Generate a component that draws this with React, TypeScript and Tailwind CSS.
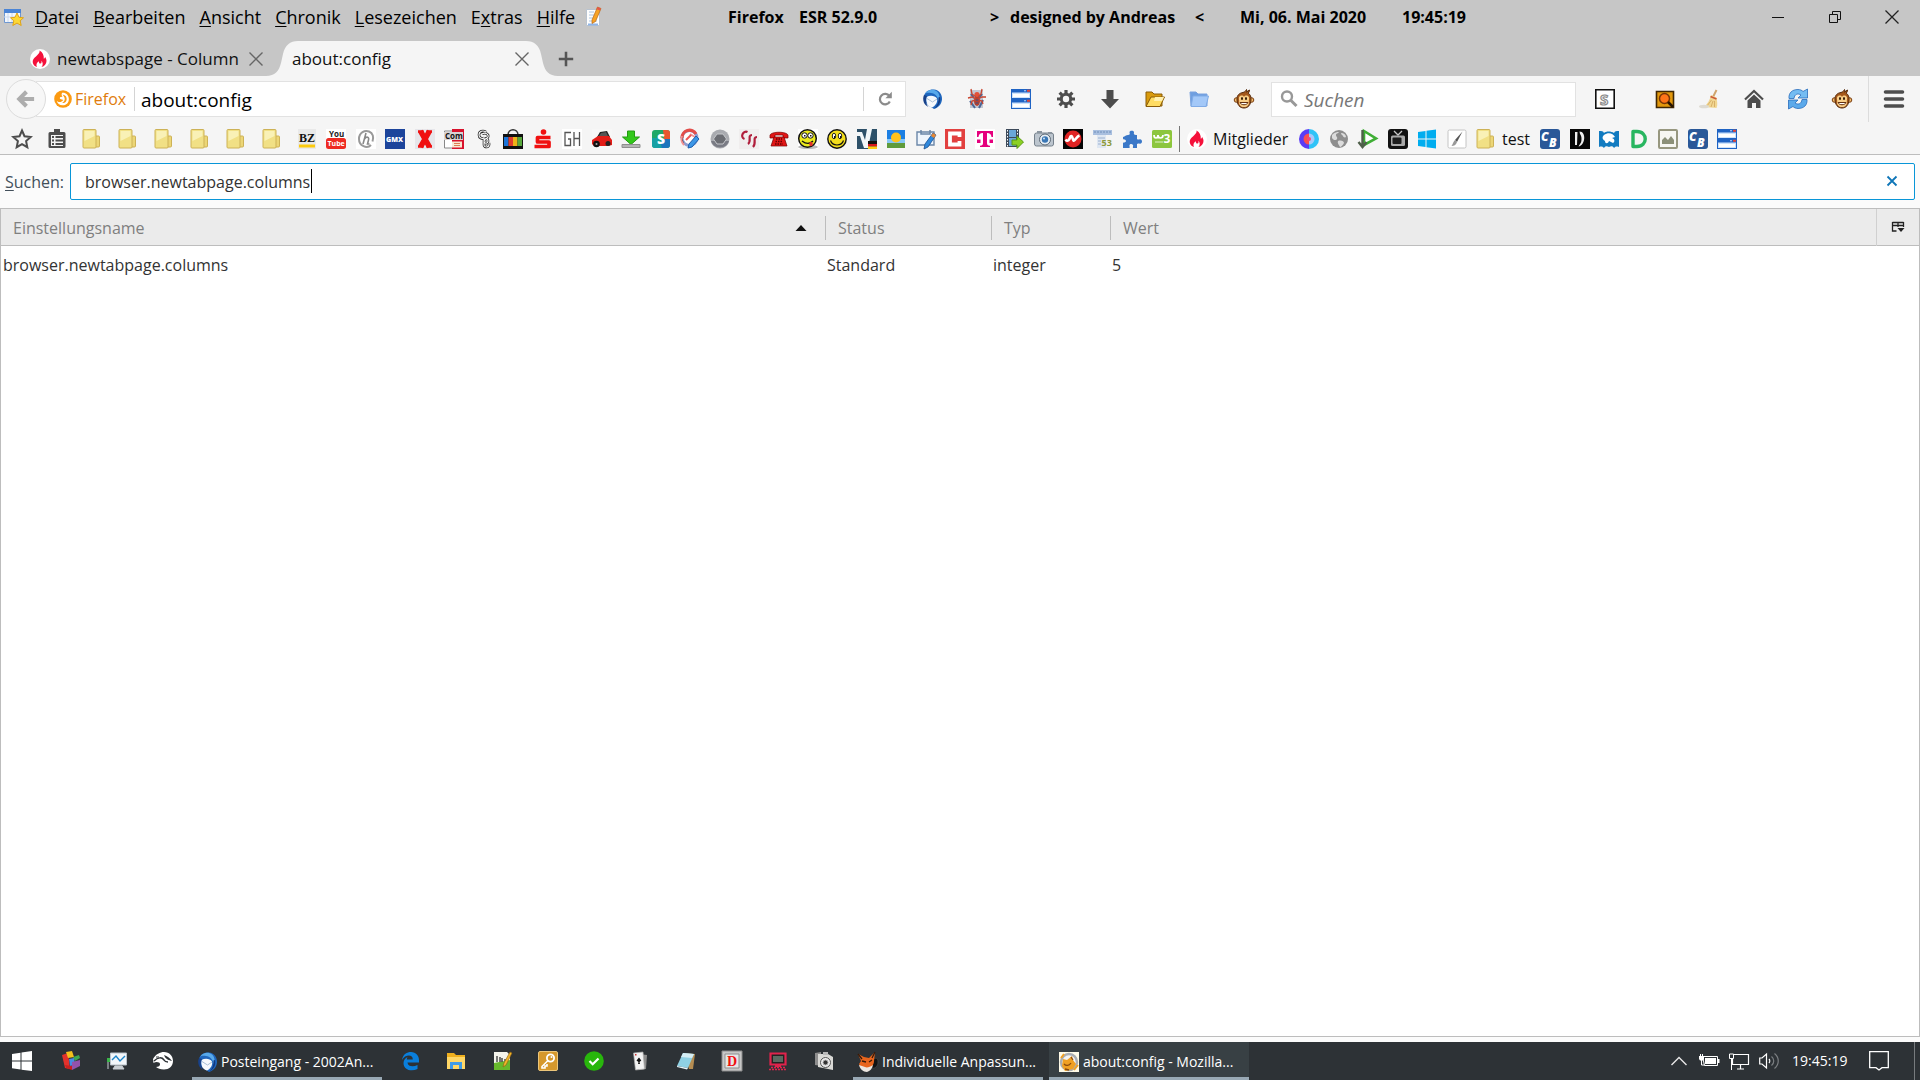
import type { ReactNode } from "react";

const FOLDER = (
  <>
    <path d="M4 1h9a1 1 0 0 1 1 1v5l3 1.5V17a1 1 0 0 1-1 1H4z" fill="#c9a93e" />
    <path d="M13 7h3.500a1 1 0 0 1 1 1v9a1 1 0 0 1-1 1H13z" fill="#ecd676" stroke="#cdb257" />
    <rect x="1" y="0.5" width="13" height="18.500" rx="1" fill="#f1e085" stroke="#cdb257" />
    <path d="M2.500 2h10v5l-10 5z" fill="#f9f1b6" />
  </>
);

const CB = (
  <>
    <rect width="20" height="20" rx="3" fill="#2a5898" />
    <text x="1" y="11.500" fontSize="12" fontWeight="800" fontStyle="italic" fill="#fff">C</text>
    <text x="9" y="17.500" fontSize="12" fontWeight="800" fontStyle="italic" fill="#fff">B</text>
  </>
);

const SESSION = (
  <>
    <path d="M0 0h20v20H0z" fill="#1e63c4" />
    <path d="M1 3.500h18v5.500H1zM1 13.500h18v5.500H1z" fill="#cfe4fc" />
    <path d="M2 5h16v3H2zM2 15h16v3H2z" fill="#fff" />
    <path d="M16 .8h3v2h-3zM16 10.800h3v2h-3z" fill="#e04438" />
    <path d="M13 1.300h2v1h-2zM13 11.300h2v1h-2z" fill="#bcd8fa" />
  </>
);

const FLAME = (
  <>
    <circle cx="10" cy="10" r="10" fill="#fff" />
    <path d="M9.500 1.500c1 3.500-5 6-6.500 9.500-1 3 .8 6 4 7-1.200-2.500 0-4.800 2-5.800-.2 1.800.5 2.500 1.500 2.300 1.200-.2 1.200-1.600.8-2.800 1.700 1.500 2 4.300.2 6.300 3-.8 5-3 5-6 0-1.800-.7-3.200-1.500-4.300 0 1-.4 1.800-1.200 2C14 6.200 12.800 3.300 9.500 1.500z" fill="#f5113b" />
  </>
);

const MONKEY = (
  <>
    <circle cx="2.500" cy="11" r="2.300" fill="#f0b96a" stroke="#7a3e10" />
    <circle cx="17.500" cy="11" r="2.300" fill="#f0b96a" stroke="#7a3e10" />
    <path d="M3 10c0-4 2.500-6 6-6.500C11 3 12 1.500 12.500.5c.5 1 .2 2-.2 2.700L15.500 1c0 1.500-.7 2.500-1.300 3.200 2 1.200 3 3.300 2.800 6.300-.2 5.500-3 8.500-7 8.500s-7-3-7-9z" fill="#a4581b" stroke="#54290a" />
    <path d="M5 8.500c1-2.500 4-2.500 5-.5 1-2 4-2 5 .5.300 1.500-.2 2.500-.2 3.500.8 4-1.800 6-4.800 6s-5.600-2-4.800-6c0-1-.5-2-.2-3.500z" fill="#f9cf88" />
    <ellipse cx="8" cy="9.500" rx="1" ry="1.600" fill="#2d1604" />
    <ellipse cx="12" cy="9.500" rx="1" ry="1.600" fill="#2d1604" />
    <path d="M6 13.500h8c-1 3-7 3-8 0z" fill="#fff" stroke="#643010" />
  </>
);

const THUNDERBIRD = (
  <>
    <path d="M2 7C3 2 8 0 12 .5c5 .5 8.500 5 8 10-.5 5-4 8.500-8 9.500-1-1-4-2-7-5C2 13 1.500 10 2 7z" fill="#1f66bd" />
    <path d="M3 5C6 0 12 0 15 2.500c3 2.500 3 7 2 10-1-5-4-8-8-8.500-3-.5-5 0-6 1z" fill="#58a9ea" />
    <path d="M4.500 8C8 6 13 6.500 15 9.500c.8 3-1 7-5 9-4-1-6.500-4.500-5.500-10.500z" fill="#f6f9fc" />
    <path d="M5 9.500l5.500 3.500L15 10" fill="none" stroke="#a9bfd6" />
    <path d="M2 6c-2 5 0 10 4.500 12C3.500 14.500 3.500 10 5 7z" fill="#17418a" />
    <path d="M18 8c1 5-1 9-5.500 11.500 3-3 4.500-7 4-11z" fill="#123a80" />
  </>
);

const ICONS: Record<string, ReactNode> = {
  folder: FOLDER,
  cb: CB,
  session: SESSION,
  flame: FLAME,
  monkey: MONKEY,
  thunderbird: THUNDERBIRD,
  bookmarkWindow: (
    <>
      <path d="M.5 2.500h16v13H.5z" fill="#f3f7fd" stroke="#6e97d0" />
      <path d="M0 2h17v4H0z" fill="#4a84d6" />
      <path d="M4 6v9M8 6v9M0 10h16" stroke="#c9d8ee" />
      <path d="M13 6l2 4.300 4.500.5-3.300 3 1 4.700-4.200-2.400L8.800 18.500l1-4.700-3.300-3 4.500-.5z" fill="#fdd835" stroke="#e0a318" />
    </>
  ),
  notepadPen: (
    <>
      <path d="M1.500 2.500h13v16h-13z" fill="#fdfdfd" stroke="#b9c3cf" />
      <path d="M3 16.500h10v2H3z" fill="#8fb4e6" />
      <path d="M4 14h8M4 11h8M4 8h6M4 5h5" stroke="#a9c4e2" />
      <path d="M7 13L12.500 0l3.500 1.500-5.500 13-3.500 2z" fill="#f7a325" stroke="#b8691a" strokeWidth="0.700" />
      <path d="M12.500 0L16 1.500l-1 2-3.500-1.200z" fill="#e3574c" />
    </>
  ),
  firefox: (
    <>
      <circle cx="10" cy="10" r="9.800" fill="#fb9a12" />
      <path d="M9 3c4-.5 7.500 2.500 7.500 7s-3 7-7 7c-3.300 0-6-2-6.500-5 1.500 1.800 3.800 1.800 5.500.7l2-1.700L7 10c-1-.8-.5-2 .5-2.200l2-.3C8.500 6.500 8 5 9 3z" fill="#fff" />
      <path d="M9.500 5c3.500.5 5 3 4.500 6-.5 2.500-2.500 3.500-5 3.500 2.300-1.500 3.300-3.300 2.800-5.500C11.300 7.500 10.500 6.500 9.500 5z" fill="#fb9a12" />
    </>
  ),
  back: <path d="M10.500 2L2.500 10l8 8M4 10h15" fill="none" stroke="#adadad" strokeWidth="4.500" />,
  reload: (
    <>
      <path d="M15.500 6.500A6.500 6.500 0 1 0 16 13" fill="none" stroke="#8b8b8b" strokeWidth="2.800" />
      <path d="M18.500 1v8h-8z" fill="#8b8b8b" />
    </>
  ),
  spider: (
    <>
      <path d="M3 1h13v18H3z" fill="#c3c8d2" />
      <path d="M3 12l5 7M16 11l-4 8M4 5l3 4M15 5l-3 4" stroke="#4a6596" strokeWidth="2" />
      <ellipse cx="10" cy="12" rx="3" ry="5" fill="#b8402f" />
      <circle cx="10" cy="5.500" r="2.600" fill="#e2523a" />
      <path d="M4 0l1 5 4 3M15 0l-1 5-3 3M1 9l4-1 4 2M19 8l-4 0-4 2M4 16l1-4 4-1M16 15l-1-3-4-1" fill="none" stroke="#c9452f" strokeWidth="1.300" />
      <path d="M8.500 11h3M8.500 14h3" stroke="#35558e" />
    </>
  ),
  gear: (
    <>
      <path d="M10 1v18M1 10h18M3.600 3.600l12.800 12.800M16.400 3.600L3.600 16.400" stroke="#4d4d4d" strokeWidth="3.200" />
      <circle cx="10" cy="10" r="4.700" fill="#f5f5f5" stroke="#4d4d4d" strokeWidth="3" />
    </>
  ),
  download: <path d="M6.500 1h7v9H19L10 19.500 1 10h5.500z" fill="#4d4d4d" />,
  openFolder: (
    <>
      <path d="M1 3h6l2 2h8v12H1z" fill="#d99a0c" stroke="#8a5c08" />
      <path d="M6 8h13.500L15 17.500H1z" fill="#ffdc62" stroke="#8a5c08" />
      <path d="M10 8h9l-2 4H9z" fill="#fff0b0" />
    </>
  ),
  blueFolder: (
    <>
      <path d="M1 3h6l2 2h9v12H2z" fill="#6f9fe0" stroke="#7aa3df" />
      <path d="M4 7h15.500L17 17.500H2z" fill="#a3c8f8" stroke="#80abe6" />
    </>
  ),
  search: (
    <>
      <circle cx="8" cy="7.500" r="5" fill="none" stroke="#989898" strokeWidth="2.400" />
      <path d="M11.500 11l6 6" stroke="#989898" strokeWidth="3" />
    </>
  ),
  stylish: (
    <>
      <path d="M.8.8h18.400v18.400H.8z" fill="#fff" stroke="#111" strokeWidth="1.600" />
      <text x="5" y="15.500" fontSize="15" fontWeight="700" fill="#fff" stroke="#8c8c8c" strokeWidth="1.200">S</text>
    </>
  ),
  orangeSearch: (
    <>
      <path d="M1.500 2.500h17v16h-17z" fill="#e2980c" stroke="#3f2603" strokeWidth="1.600" />
      <circle cx="9.500" cy="9.500" r="5" fill="#ff7418" stroke="#7a3606" strokeWidth="1.500" />
      <path d="M13 13l5 5" stroke="#2a1600" strokeWidth="2.600" />
    </>
  ),
  broom: (
    <>
      <path d="M17.500 1l-3.500 7" stroke="#cfa46c" strokeWidth="2" />
      <path d="M12 6l5.500 2.500c.5 4 1.500 7 0 10.500L5 18c3.500-3 6-7 7-12z" fill="#f1d691" />
      <path d="M11.500 7.500l6 2.500" stroke="#cc5b39" strokeWidth="1.800" />
      <path d="M8 17l4.500-6M12 18l2-6M15.500 18l0-6" stroke="#d8b068" />
      <ellipse cx="5" cy="17.500" rx="5" ry="1.800" fill="#dedbd2" />
    </>
  ),
  home: (
    <>
      <path d="M1 10.500L10 2l9 8.500" fill="none" stroke="#4d4d4d" strokeWidth="2.200" />
      <path d="M3.500 11.500L10 5.500l6.500 6V19H12v-5H8v5H3.500z" fill="#4d4d4d" />
    </>
  ),
  sync: (
    <>
      <path d="M1 9.500C.5 4 4 .5 10 .5c2 0 4 .8 5 2L19.500 0v9H10l3-3C10 4 6.500 5 6 9.500z" fill="#74bcf2" stroke="#276cbd" strokeWidth="0.800" />
      <path d="M19 10.500c.5 5.500-3 9-9 9-2 0-4-.8-5-2L.5 20v-9H10l-3 3c3 2 6.500 1 7-3.500z" fill="#5ba9ea" stroke="#276cbd" strokeWidth="0.800" />
    </>
  ),
  menu: <path d="M1.500 3h17M1.500 10h17M1.500 17h17" stroke="#4d4d4d" strokeWidth="3.600" strokeLinecap="round" />,
  star: <path d="M10 1.500l2.500 5.700 6.200.7-4.600 4.200 1.200 6.100L10 15.100l-5.300 3.100 1.200-6.100L1.300 7.900l6.200-.7z" fill="none" stroke="#4d4d4d" strokeWidth="2" />,
  clipboard: (
    <>
      <path d="M7 0h6v3h4a1.500 1.500 0 0 1 1.500 1.500v13A1.500 1.500 0 0 1 17 19H3a1.500 1.500 0 0 1-1.500-1.500v-13A1.500 1.500 0 0 1 3 3h4z" fill="#4d4d4d" />
      <path d="M4 6h12v11H4z" fill="#f5f5f5" />
      <path d="M5 8h2M5 11.500h2M5 15h2M8.500 8H16M8.500 11.500H16M8.500 15H16" stroke="#4d4d4d" strokeWidth="1.800" />
    </>
  ),
  bz: (
    <>
      <path d="M1 0h18v20H1z" fill="#e9e9e9" />
      <text x="2" y="12.500" fontSize="12" fontFamily="Liberation Serif, serif" fontWeight="700" fill="#111">BZ</text>
      <path d="M2 15.500h16v3H2z" fill="#fccb0f" />
    </>
  ),
  youtube: (
    <>
      <path d="M0 0h20v20H0z" fill="#fff" />
      <rect y="9" width="20" height="11" rx="2.500" fill="#ee2a22" />
      <text x="3" y="7.500" fontSize="8" fontWeight="700" fill="#222">You</text>
      <text x="1.500" y="17" fontSize="7" fontWeight="700" fill="#fff">Tube</text>
    </>
  ),
  at: (
    <>
      <path d="M0 0h20v20H0z" fill="#fff" />
      <path d="M15 16c-4 4-12 1-12-6S9 1 13 2.500s5 6 3.500 10" fill="none" stroke="#999" strokeWidth="2" />
      <path d="M10 4L7 15M8.500 10c2-3 5-2 4 1l-1 4h2" fill="none" stroke="#888" strokeWidth="1.600" />
    </>
  ),
  gmx: (
    <>
      <path d="M0 0h20v20H0z" fill="#1c449b" />
      <text x="1" y="12.500" fontSize="7" fontWeight="800" fill="#fff">GMX</text>
    </>
  ),
  redX: (
    <>
      <path d="M0 0h20v20H0z" fill="#e6e6ea" />
      <path d="M5.500 2l9 16M14.500 2l-9 16" stroke="#f01010" strokeWidth="5.500" />
      <path d="M3 2.500h5.500M11.500 2.500H17M3 17.500h5.500M11.500 17.500H17" stroke="#f01010" strokeWidth="2.500" />
    </>
  ),
  com: (
    <>
      <path d="M.5 2h15v17H.5z" fill="#fff" stroke="#888" />
      <path d="M8 0h12v20H8z" fill="#d8122c" />
      <path d="M0 3h19v8H0z" fill="#d9d2d2" />
      <path d="M8 12.500h10v6H8z" fill="#f8e8d4" />
      <path d="M10 14.500h6M10 16.500h6" stroke="#dd7b52" />
      <text x="1" y="10" fontSize="8" fontWeight="700" fill="#111">Com</text>
    </>
  ),
  braid: (
    <>
      <path d="M12 3c-3-2-7-1-7 3 0 3 3 4 5 3M8 5c3-2 7 0 6 3-1 2-4 1-4 4 0 3 4 3 4 0s-3-3-4 0M10 8v8c0 3 6 3 5-2" fill="none" stroke="#222" strokeWidth="2.600" />
      <path d="M12 3c-3-2-7-1-7 3 0 3 3 4 5 3M8 5c3-2 7 0 6 3-1 2-4 1-4 4 0 3 4 3 4 0s-3-3-4 0M10 8v8c0 3 6 3 5-2" fill="none" stroke="#fff" strokeWidth="1.100" />
    </>
  ),
  bag: (
    <>
      <path d="M5 6c0-7 10-7 10 0" fill="none" stroke="#333" strokeWidth="1.500" />
      <path d="M0 5h20v15H0z" fill="#111" />
      <path d="M1 8h4.500v9H1z" fill="#1c74d8" />
      <path d="M5.500 8H10v9H5.500z" fill="#df3d2d" />
      <path d="M10 8h4.500v9H10z" fill="#efb418" />
      <path d="M14.500 8H19v9h-4.500z" fill="#58a83c" />
    </>
  ),
  sparkasse: (
    <>
      <circle cx="10.500" cy="3" r="2.800" fill="#f01010" />
      <path d="M17.500 8.500H4.500v4.500H16v4.500H1.500" fill="none" stroke="#f01010" strokeWidth="3.700" strokeLinejoin="round" />
    </>
  ),
  gh: (
    <>
      <path d="M0 0h20v20H0z" fill="#fff" />
      <path d="M9 3.500H3v13h5.500V10H6M12 3v14M17.500 3v14M12 9.500h5.500" fill="none" stroke="#555" strokeWidth="1.300" />
    </>
  ),
  car: (
    <>
      <path d="M0 0h20v20H0z" fill="#f7f7f7" />
      <path d="M5 8l3-5 7-1 3 6z" fill="#222" />
      <path d="M0 11l6-4 11 0 3 4v5l-4 1H2l-2-2z" fill="#e31c17" />
      <path d="M7 7l2-3 5-1 2 4z" fill="#555" />
      <circle cx="4.500" cy="15" r="3.300" fill="#111" />
      <circle cx="16" cy="14.500" r="2.500" fill="#222" />
      <circle cx="4.500" cy="15" r="1" fill="#aaa" />
    </>
  ),
  greenDown: (
    <>
      <path d="M6.500 2h7v6h5L10 15.500 1.500 8h5z" fill="#32c81a" stroke="#249a12" />
      <path d="M1 15.500h18v3H1z" fill="#b5b5b5" stroke="#8e8e8e" />
    </>
  ),
  sColor: (
    <>
      <rect x="1" y="1" width="18" height="18" rx="3" fill="#1fa868" />
      <path d="M12 1h4a3 3 0 0 1 3 3v6h-6z" fill="#e8562e" />
      <path d="M10 10h9v6a3 3 0 0 1-3 3h-6z" fill="#1c75bd" />
      <path d="M1 9l7 0 3 10H4a3 3 0 0 1-3-3z" fill="#16a0a4" />
      <text x="6" y="15" fontSize="14" fontWeight="800" fill="#fff">S</text>
    </>
  ),
  compass: (
    <>
      <circle cx="9.500" cy="9" r="7.500" fill="#fff" stroke="#8d9cd0" strokeWidth="3" />
      <path d="M2 9a7.500 7.500 0 0 1 14-4" fill="none" stroke="#e34d49" strokeWidth="3.200" />
      <path d="M4 16a9 9 0 0 1-2-9M10 5l5 3" stroke="#f39292" strokeWidth="2" />
      <path d="M6 11l5-5" stroke="#e55" strokeWidth="2" />
      <path d="M16 7l3 3-7 8-4 1 1-4z" fill="#3d97e6" stroke="#1c5fae" />
    </>
  ),
  ring: (
    <>
      <circle cx="10" cy="10" r="9.500" fill="#a9abb0" />
      <path d="M1 12a9.500 9.500 0 0 0 18 0z" fill="#797b84" />
      <path d="M7 5h6l3.500 5-3.500 5H7l-3.500-5z" fill="#6b6d73" stroke="#c4c6ca" />
    </>
  ),
  css: (
    <>
      <path d="M0 0h20v20H0z" fill="#f0eeee" />
      <path d="M8.500 3c-4-2-8 5-3 7M13 6c-5 0 0 6-4 9M18 8c-5 0 0 6-4 10" fill="none" stroke="#b01e3c" strokeWidth="2.200" />
    </>
  ),
  phone: (
    <>
      <path d="M1 7c-1-5 19-5 18 0v2h-5V6H6v3H1z" fill="#e21616" stroke="#700" strokeWidth="0.700" />
      <path d="M5 8h10l3 9H2z" fill="#e21616" stroke="#700" strokeWidth="0.700" />
      <path d="M7 10h6M6.500 12.500h7M6 15h8" stroke="#600" strokeWidth="1.500" strokeDasharray="1.500 1" />
    </>
  ),
  goofy: (
    <>
      <path d="M0 0h20v20H0z" fill="#fff" />
      <ellipse cx="10" cy="18" rx="10" ry="2" fill="#bbb" />
      <circle cx="9.500" cy="9.500" r="8.800" fill="#ecea1c" stroke="#111" strokeWidth="1.500" />
      <circle cx="6.500" cy="6.500" r="2.700" fill="#fff" stroke="#111" />
      <circle cx="12.500" cy="6.500" r="2.700" fill="#fff" stroke="#111" />
      <path d="M6 6h1.500v1.500H6zM12 6h1.500v1.500H12z" fill="#111" />
      <path d="M4 12c4 3 8 3 11 0" fill="none" stroke="#111" strokeWidth="1.400" />
      <ellipse cx="13" cy="15" rx="1.800" ry="2.300" fill="#e0322a" />
    </>
  ),
  smiley: (
    <>
      <circle cx="10" cy="10" r="9.200" fill="#f4de1c" stroke="#111" strokeWidth="1.400" />
      <ellipse cx="7" cy="7" rx="1.700" ry="2.800" fill="#fff" stroke="#111" strokeWidth="0.900" />
      <ellipse cx="13" cy="7" rx="1.700" ry="2.800" fill="#fff" stroke="#111" strokeWidth="0.900" />
      <path d="M7 7h1v2H7zM13 7h1v2h-1z" fill="#111" />
      <path d="M3.500 11.500c2 6 11 6 13 0" fill="none" stroke="#111" strokeWidth="1.200" />
    </>
  ),
  vGerman: (
    <>
      <path d="M0 0h20v20H0z" fill="#2d5068" />
      <path d="M0 3h5l3 8 2-11h5l-4 19H7L3 7H0z" fill="#f2f6f8" />
      <path d="M11 12h9v3h-9z" fill="#111" />
      <path d="M11 15h9v2.500h-9z" fill="#d8151c" />
      <path d="M11 17.500h9V20h-9z" fill="#fccb0f" />
    </>
  ),
  sun: (
    <>
      <path d="M1 1h18v18H1z" fill="#1c7fe3" />
      <path d="M1 10h18v4H1z" fill="#86c7f8" />
      <path d="M1 14h18v5H1z" fill="#5f9b3c" />
      <circle cx="10" cy="8.500" r="5" fill="#ffc21c" />
    </>
  ),
  clipPen: (
    <>
      <path d="M1 3h17v13H1z" fill="#eef5fd" stroke="#6b87a8" strokeWidth="1.400" />
      <path d="M5 1v4h9V1" fill="none" stroke="#6b87a8" strokeWidth="1.500" />
      <path d="M17 4l3 2-8 12-4 2 1-5z" fill="#2e88dd" stroke="#1a4f91" strokeWidth="0.800" />
      <path d="M17 4l3 2-2 3-3-2z" fill="#e88733" />
    </>
  ),
  chipRed: (
    <>
      <path d="M0 0h20v20H0z" fill="#e2403f" />
      <path d="M14.500 8V4.500H5v11h9.500V12" fill="none" stroke="#fff" strokeWidth="3.800" />
    </>
  ),
  telekom: (
    <>
      <path d="M0 0h20v20H0z" fill="#fff" />
      <path d="M2 2h16v6h-1.500c-.3-2.500-1.500-4-4.500-4v10c0 2 .8 2.600 3 2.800V18H5v-1.200c2.200-.2 3-.8 3-2.800V4c-3 0-4.200 1.500-4.500 4H2zM2 10.500h3.500V14H2zM14.500 10.500H18V14h-3.500z" fill="#e5007d" />
    </>
  ),
  film: (
    <>
      <path d="M2 0h13v18H2z" fill="#3d4a5a" />
      <path d="M5 1h7v7H5zM5 9h7v8H5z" fill="#6aa7da" />
      <path d="M3.500 1v17M13.500 1v17" stroke="#fff" strokeDasharray="1.500 1.500" />
      <path d="M8 11h5V7l6.500 6L13 19.500V16H8z" fill="#8bd024" stroke="#5b9a12" />
    </>
  ),
  camera: (
    <>
      <rect x="0.500" y="4" width="19" height="13" rx="2" fill="#bcc5ce" stroke="#76818c" />
      <path d="M3 2h5v2H3zM14 3h4v2h-4z" fill="#8a949e" />
      <circle cx="11" cy="10.500" r="5.500" fill="#e5edf4" stroke="#5b6773" />
      <circle cx="11" cy="10.500" r="3.200" fill="#3a77b5" />
      <circle cx="10" cy="9.500" r="1" fill="#cfe6fa" />
    </>
  ),
  pulse: (
    <>
      <path d="M0 0h20v20H0z" fill="#050505" />
      <circle cx="10" cy="10" r="8.500" fill="#e02424" />
      <path d="M2.500 10.500c2 3 4 0 5-3 2-2 2 3 3 4s3-4 6-5" fill="none" stroke="#fff" strokeWidth="2.600" />
    </>
  ),
  tool53: (
    <>
      <path d="M0 1h19v5H0z" fill="#a9bfdf" />
      <path d="M4 6h9v13H4z" fill="#dfe7f2" />
      <path d="M1 3h17" stroke="#6f8eb9" strokeDasharray="2 1" />
      <path d="M5 9h7M5 12h3M5 15h3" stroke="#9ab0d0" />
      <text x="8.500" y="17" fontSize="9" fontWeight="700" fill="#8e9a3a">53</text>
    </>
  ),
  puzzle: <path d="M6 6c2 0 2-1 1.500-2.500C7 1 12.500 1 12 3.500 11.500 5 12 6 14 6h1v4c1 1 1.800.5 2.800.3 3-.3 3 4.700 0 4.400-1-.2-1.800-.7-2.800.3v4h-4c-.5-1 .5-2 0-3-.8-1.500-3-1.500-3.500 0-.3 1 .5 2 0 3H1v-4.500C.5 13 4 14 4 12s-3-1-3-2.500V8c2-.5 3-2 5-2z" fill="#3b78c8" />,
  w3: (
    <>
      <rect y="1" width="20" height="18" rx="1.500" fill="#8cc63e" />
      <path d="M2 6c0 4 4 4 4 0 0 4 5 4 5 0" fill="none" stroke="#fff" strokeWidth="1.700" />
      <path d="M3 13h8" stroke="#dff2c6" />
      <text x="11.500" y="14" fontSize="12" fontWeight="700" fill="#fff">3</text>
    </>
  ),
  swirl: (
    <>
      <path d="M10 0a10 10 0 0 0 0 20z" fill="#5b3cf5" />
      <path d="M10 0a10 10 0 0 1 0 20z" fill="#2fc3f7" />
      <path d="M10 4.500a5.500 5.500 0 0 0 0 11z" fill="#fb4d4f" />
      <path d="M10 4.500a5.500 5.500 0 0 1 0 11z" fill="#a6c8fa" />
      <circle cx="10" cy="10" r="2" fill="#f04b7a" />
    </>
  ),
  globe: (
    <>
      <circle cx="10" cy="10" r="9" fill="#8e8e8e" />
      <path d="M3 6c3-3 5-3 7-3-1 2-3 1-3 3s2 2 1 4-4 1-5-1zM12 4c3 0 5 2 5 4-1 1-3 0-3-1s-2-1-2-3zM9 12c3-1 6 0 6 2-1 2-3 4-4 4-1-2-3-4-2-6z" fill="#dcdcdc" />
    </>
  ),
  play: (
    <>
      <path d="M6 2l12 7.500L6 16z" fill="#fff" stroke="#3fae35" strokeWidth="2.600" />
      <path d="M4.500 1v16M.5 13l4 5 4-5" fill="none" stroke="#4f5f4a" strokeWidth="2.400" />
    </>
  ),
  tv: (
    <>
      <rect width="20" height="20" rx="3" fill="#121212" />
      <path d="M6 2l4 4 4-4" fill="none" stroke="#c9c9c9" strokeWidth="1.300" />
      <rect x="3" y="6.500" width="14" height="10.500" rx="1.500" fill="#a9a9a9" />
      <rect x="4.500" y="8.500" width="9" height="6.500" rx="1" fill="#1d1d1d" />
    </>
  ),
  win10: <path d="M1 3l7.500-1v7.500H1zM9.500 1.800L19 .5v9H9.500zM1 10.500h7.500V18L1 17zM9.500 10.500H19v9l-9.500-1.300z" fill="#00adef" />,
  brush: (
    <>
      <rect x="1" y="1" width="18" height="18" rx="1.500" fill="#fff" stroke="#c4c4c4" />
      <path d="M15.500 2.500L8 11l2 2z" fill="#555" />
      <path d="M8 11l2 2c-1 3-3 4-5.500 4 1.500-2 1.500-4 3.500-6z" fill="#999" />
    </>
  ),
  dBlack: (
    <>
      <path d="M0 0h20v20H0z" fill="#080808" />
      <path d="M5 3h2.500l-.5 13H5zM9.500 2.500c7 0 6 14-1 15l1.500-2.500c2-2 2-8 0-10z" fill="#eee" />
    </>
  ),
  blueBook: (
    <>
      <path d="M0 2c3 0 4 0 5 2 2-2 7-2 10 0 1-2 2-2 5-2v16c-3-1-4 0-5 1-1-2-3-2-5-1-2-1-4-1-5 1-1-1-2-2-5-1z" fill="#127bc0" />
      <path d="M5 6c4-3 9-2 11 2l-3 1c3 1 3 4 1 5l-4-2c-1 3-4 3-4 0-3-2-3-4-1-6z" fill="#fff" />
    </>
  ),
  dGreen: <path d="M4 2.500h4c11 0 11 15 0 15H4z" fill="none" stroke="#28b660" strokeWidth="3.400" strokeLinejoin="round" />,
  image: (
    <>
      <rect x="1" y="1" width="18" height="18" rx="1" fill="#f7f7f2" stroke="#97977f" strokeWidth="2" />
      <path d="M4 15V11l3-3 3 3 3-4 3 4v4z" fill="#8c9078" />
    </>
  ),
  windows: <path d="M0 3l8.500-1.300V9.500H0zM9.500 1.500L20 0v9.500H9.500zM0 10.500h8.500v8L0 17.300zM9.500 10.500H20V20L9.500 18.700z" fill="#fff" />,
  blocks: (
    <>
      <path d="M1 4l6-2 2 16-5-1z" fill="#e2322c" />
      <path d="M5 1l6-1 2 6-6 1z" fill="#f4c01c" />
      <path d="M12 6l6-2 1 3-5 3z" fill="#3da751" />
      <path d="M8 8l5-1 1 7-5 1z" fill="#468be4" />
      <path d="M11 11l8-2v6l-8 4z" fill="#9352ac" />
      <path d="M4 14l7 1v4l-6-2z" fill="#c92020" />
    </>
  ),
  monitorGraph: (
    <>
      <path d="M3.500 2h16v12h-16z" fill="#f2f6fa" stroke="#b9c1c9" />
      <path d="M5 9l4-4 4 5 5-5" fill="none" stroke="#1d84c8" strokeWidth="1.400" />
      <path d="M0 7h3v4H0z" fill="#3bb54a" />
      <path d="M1 11v7M8 15h7l2 3H6z" stroke="#c9ced3" fill="#c9ced3" />
    </>
  ),
  dinosaur: (
    <>
      <path d="M0 8C3 3 7 1 11 1c5.500 0 9 4 9 9s-4 8.500-9 8.500c-4 0-6-1-8-2.500 4 0 5-3 3-4.500C4 10.500 2 11 .5 12z" fill="#fff" />
      <path d="M1 10C5 6 9 6 11 9c1 2 2 2 4 2" fill="none" stroke="#2d3236" strokeWidth="1.500" />
      <path d="M11 4c3 1 6 3 8 6-3-1-6-1-8-6z" fill="#2d3236" />
      <path d="M3 6h3" stroke="#2d3236" />
    </>
  ),
  edge: <path d="M2 9C3 3 7 1 11 1c5 0 8 4 8 8v2.500H7.500c.3 4 5.500 5 10 2.500v4c-6 3-14 1-14-6 0-3 2-5 4-6-.5 1-.7 2-.7 2.500h6C13 3 5 3.500 2 9z" fill="#0a7fdc" />,
  explorer: (
    <>
      <path d="M1 2h7l2 2h9v14H1z" fill="#f0b01e" />
      <path d="M1 6h18v12H1z" fill="#ffd766" />
      <path d="M4 18v-7h12v7h-3v-4H7v4z" fill="#3f9be6" />
    </>
  ),
  notepadpp: (
    <>
      <path d="M2 1h13l3 3v15H2z" fill="#f4f4ec" />
      <path d="M2 12l16-3v10H2z" fill="#67b82c" />
      <path d="M5 5v6M8 6v5M10 7v4M13 8v2" stroke="#333" strokeWidth="1.300" />
      <path d="M18 1l2 1-6 12-3 2 1-4z" fill="#f0b62a" stroke="#8c5b12" strokeWidth="0.600" />
    </>
  ),
  key: (
    <>
      <rect x="0.500" y="0.500" width="19" height="19" rx="1.500" fill="#d6982c" stroke="#ecc67a" />
      <circle cx="12.500" cy="7" r="3.600" fill="none" stroke="#fff" strokeWidth="1.800" />
      <path d="M10 9.500L4 15.500v1.500h3v-2h2v-2" fill="none" stroke="#fff" strokeWidth="1.600" />
      <circle cx="13.500" cy="6" r="1" fill="#fff" />
    </>
  ),
  check: (
    <>
      <circle cx="10" cy="10" r="9.800" fill="#28b60c" />
      <path d="M5.500 10l3.200 3.200L14.500 7.500" fill="none" stroke="#fff" strokeWidth="2.200" />
    </>
  ),
  cards: (
    <>
      <path d="M9 3l8 1-1 14-7 1z" fill="#8d8d8d" />
      <path d="M3.500 2l9.500-1 1.500 17-9 1z" fill="#f3f3f3" stroke="#aaa" strokeWidth="0.700" />
      <path d="M9 6.500l2.300 3-1.800 1.500.5 2H8l.5-2-2-1.500z" fill="#111" />
      <path d="M5 3h1.500v1.500H5z" fill="#c33" />
    </>
  ),
  note: (
    <>
      <path d="M8 2l11 1-2 15H13z" fill="#b58d52" />
      <path d="M7 2l11 1-6 14L1 15z" fill="#8fd1e4" />
      <path d="M7 2l11 1-2 4L5 6z" fill="#d5eef5" />
      <path d="M1 15l11 2-1 1.500L1 16z" fill="#e9f6fa" />
    </>
  ),
  dRed: (
    <>
      <path d="M0 0h20v20H0z" fill="#c7c7c7" stroke="#8a8a8a" />
      <path d="M3 3h14v14H3z" fill="#e6e6e6" stroke="#8f8f8f" />
      <text x="5" y="15" fontSize="14" fontWeight="700" fontFamily="Liberation Serif, serif" fill="#f01010">D</text>
    </>
  ),
  redPc: (
    <>
      <path d="M2.500 2.500h15v11h-15z" fill="#222" stroke="#e0234c" strokeWidth="2.200" />
      <path d="M5 5h10v6H5z" fill="#5a6a61" />
      <path d="M7 14h6v2H7z" fill="#e0234c" />
      <path d="M1 18.500h18M3 16.500h15" stroke="#e0234c" strokeWidth="1.500" strokeDasharray="2 1" />
    </>
  ),
  grayCam: (
    <>
      <path d="M1 2l6-1v14l-6-1z" fill="#8d8d8d" />
      <path d="M4 3h10l5 3v13L4 16z" fill="#d9d9d6" />
      <path d="M9 1h5v3H9z" fill="#b9b9b9" />
      <circle cx="11.500" cy="11.500" r="5" fill="#efefef" stroke="#555" />
      <circle cx="11.500" cy="11.500" r="2.500" fill="#333" stroke="#aaa" />
    </>
  ),
  fox: (
    <>
      <path d="M14 8c4-3 6-2 6 2s-3 7-6 6z" fill="#111314" stroke="#4c5053" strokeWidth="0.600" />
      <path d="M0 2l6 3 5 1 6-6-1 9c0 4-3 7-6 9-5 0-8-3-9-6l2-3z" fill="#e8651d" />
      <path d="M1 13c2 1 4 1 6 2s5 0 8-2c-1 4-3 6-6 7-4 0-7-3-8-7z" fill="#ece6e0" />
      <path d="M4 9l4 1M14 8l-3 2M0 2l4 5M17 0l-3 6" stroke="#371a08" strokeWidth="1.300" />
    </>
  ),
  foxRing: (
    <>
      <path d="M0 0h20v20H0z" fill="#fffbe8" />
      <circle cx="10" cy="10" r="8" fill="#f3f3f3" stroke="#a9adb2" strokeWidth="2.500" />
      <path d="M4 7l4 1 5-4 1 4 3 4-3 5-8 2-3-5z" fill="#f0a023" />
      <path d="M5 12c2 2 5 2 7-1M12 5l2 3M6 17l4 1" fill="none" stroke="#8a4a0b" strokeWidth="1.300" />
      <path d="M2 6l3-4M15 18l4-5" stroke="#f0a023" strokeWidth="2" />
    </>
  ),
  chevronUp: <path d="M2.500 14L10 6.500l7.500 7.500" fill="none" stroke="#e8e8e8" strokeWidth="1.400" />,
  battery: (
    <>
      <path d="M3.500 5.500h15v9h-13z" fill="none" stroke="#fff" />
      <path d="M6 7h11v6H6zM19 8h1.500v4H19zM0 5h5v3l-1 1.500H1L0 8z" fill="#fff" />
      <path d="M1.500 3v3M3.500 3v3M2.500 9v5h3" fill="none" stroke="#fff" />
    </>
  ),
  network: (
    <>
      <path d="M5 3.500h14.500v10H3.500V8M11.500 14v4M8 18h7" fill="none" stroke="#fff" strokeWidth="1.200" />
      <path d="M.5 3v4.500h4V3zM2.500 8v11" fill="none" stroke="#fff" />
    </>
  ),
  speaker: (
    <>
      <path d="M.7 7v6H3l4.500 4V3L3 7z" fill="none" stroke="#fff" strokeWidth="1.200" />
      <path d="M10 8c1 1 1 3 0 4" fill="none" stroke="#fff" strokeWidth="1.200" />
      <path d="M12.500 5.500c3 2.500 3 6.500 0 9M15.500 2.500c5 4 5 11 0 15" fill="none" stroke="#7b7f82" strokeWidth="1.200" />
    </>
  ),
  message: <path d="M.7.7h18.600v16H13L10 19l-3-2.300H.7z" fill="none" stroke="#fff" strokeWidth="1.300" />,
  minimize: <path d="M4 10.500h12" stroke="#111" />,
  restore: <path d="M4.500 7.500h8v8h-8zM7.500 7.500v-3h8v8h-3" fill="none" stroke="#111" />,
  close: <path d="M3.500 3.500l13 13M16.500 3.500l-13 13" stroke="#222" strokeWidth="1.300" />,
  tabClose: <path d="M3.500 3.500l13 13M16.500 3.500l-13 13" stroke="#666" strokeWidth="1.400" />,
  plus: <path d="M10 1v18M1 10h18" stroke="#555" strokeWidth="3.200" />,
  clear: <path d="M5.500 5.500l9 9M14.500 5.500l-9 9" stroke="#0f76b8" strokeWidth="1.800" />,
  sortUp: <path d="M4.500 13L10 7l5.500 6z" fill="#111" />,
  picker: (
    <>
      <path d="M4.500 5.500h11M4.500 8.500h11M4.500 5v9h4M10 5v5M15.500 5v5" fill="none" stroke="#222" strokeWidth="1.300" />
      <path d="M9.500 11h7L13 15z" fill="#222" />
    </>
  ),
};

function Icon({ name, className = "size-5" }: { name: string; className?: string }) {
  return (
    <svg viewBox="0 0 20 20" className={`${className} shrink-0 overflow-visible`} aria-hidden="true">
      {ICONS[name]}
    </svg>
  );
}

function IconButtons({ names, className = "" }: { names: string[]; className?: string }) {
  return (
    <div className={`flex shrink-0 items-center justify-between ${className}`}>
      {names.map((name, i) => (
        <button key={i} type="button" aria-label={name}>
          <Icon name={name} className="block size-5" />
        </button>
      ))}
    </div>
  );
}

const menus = [
  ["", "D", "atei"],
  ["", "B", "earbeiten"],
  ["", "A", "nsicht"],
  ["", "C", "hronik"],
  ["", "L", "esezeichen"],
  ["E", "x", "tras"],
  ["", "H", "ilfe"],
];

function TitleBar() {
  return (
    <header className="flex h-[41px] bg-[#c6c6c6] pb-[7px] text-black">
      <nav className="flex w-[728px] shrink-0 items-center gap-3.5 pl-1 text-lg">
        <Icon name="bookmarkWindow" className="-mr-[3px] size-5" />
        {menus.map(([before, key, after]) => (
          <button key={before + key + after} type="button" className="leading-6">
            {before}
            <span className="underline decoration-1 underline-offset-2">{key}</span>
            {after}
          </button>
        ))}
        <Icon name="notepadPen" className="-ml-1 size-5" />
      </nav>
      <div className="flex flex-1 items-center whitespace-pre text-base font-bold">
        <span className="w-[71px]">Firefox</span>
        <span className="w-[191px]">ESR 52.9.0</span>
        <span className="w-5">&gt;</span>
        <span className="w-[185px]">designed by Andreas</span>
        <span className="w-[45px]">&lt;</span>
        <span className="w-[162px]">Mi, 06. Mai 2020</span>
        <span>19:45:19</span>
      </div>
      <div className="flex">
        {["minimize", "restore", "close"].map((name) => (
          <button key={name} type="button" aria-label={name} className="grid w-[57px] place-items-center">
            <Icon name={name} />
          </button>
        ))}
      </div>
    </header>
  );
}

function TabStrip() {
  return (
    <div className="flex h-[35px] items-center bg-[#c6c6c6] text-[17px] text-[#111]">
      <div className="flex w-[266px] items-center pl-[30px]">
        <Icon name="flame" />
        <span className="ml-[7px] w-[193px] whitespace-nowrap">newtabspage - Column</span>
        <button type="button" aria-label="Tab schließen">
          <Icon name="tabClose" className="block size-5" />
        </button>
      </div>
      <div className="relative h-full w-[292px]">
        <svg viewBox="0 0 292 35" preserveAspectRatio="none" className="absolute inset-0 size-full" aria-hidden="true">
          <path d="M0 35c9 0 13-5 15-13l2-9C19 4 24 0 32 0h228c8 0 13 4 15 13l2 9c2 8 6 13 15 13z" fill="#f5f5f5" />
        </svg>
        <div className="relative flex h-full items-center justify-between pr-[26px] pl-[26px]">
          <span>about:config</span>
          <button type="button" aria-label="Tab schließen">
            <Icon name="tabClose" className="block size-5" />
          </button>
        </div>
      </div>
      <button type="button" aria-label="Neuer Tab">
        <Icon name="plus" className="block size-4" />
      </button>
    </div>
  );
}

function NavBar() {
  return (
    <div className="flex h-[46px] items-center bg-[#f5f5f5]">
      <button
        type="button"
        aria-label="Zurück"
        className="z-10 ml-1.5 grid size-10 shrink-0 place-items-center rounded-full border border-[#dcdcdc] bg-[#f7f7f7]"
      >
        <Icon name="back" className="size-[18px]" />
      </button>
      <div className="-ml-2.5 flex h-9 flex-1 items-center border border-[#e2e2e2] bg-white pl-[17px]">
        <Icon name="firefox" className="size-[18px]" />
        <span className="ml-[3px] w-[59px] text-base text-[#e07c0c]">Firefox</span>
        <input
          aria-label="Adresse"
          defaultValue="about:config"
          className="h-6 min-w-0 flex-1 border-l border-[#d4d4d4] pt-0.5 pl-1.5 text-[19px] text-black outline-none"
        />
        <button type="button" aria-label="Neu laden" className="grid h-6 w-[42px] place-items-center border-l border-[#d4d4d4]">
          <Icon name="reload" className="size-4" />
        </button>
      </div>
      <IconButtons
        className="ml-4 w-[332px]"
        names={["thunderbird", "spider", "session", "gear", "download", "openFolder", "blueFolder", "monkey"]}
      />
      <label className="ml-[17px] flex h-[35px] w-[305px] shrink-0 items-center border border-[#e2e2e2] bg-white pl-[7px]">
        <Icon name="search" />
        <input
          aria-label="Suchen"
          placeholder="Suchen"
          className="ml-[5px] h-7 min-w-0 flex-1 pt-0.5 text-[19px] italic outline-none placeholder:text-[#777]"
        />
      </label>
      <IconButtons className="ml-[19px]" names={["stylish"]} />
      <IconButtons className="ml-10 w-[197px]" names={["orangeSearch", "broom", "home", "sync", "monkey"]} />
      <div className="ml-4 h-full w-px bg-[#dcdcdc]" />
      <IconButtons className="mr-4 ml-[15px]" names={["menu"]} />
    </div>
  );
}

function BookmarksBar() {
  return (
    <div className="flex h-[33px] items-center border-b border-[#bdbdbd] bg-[#f5f5f5] pt-0.5 pl-3 text-base text-[#111]">
      <IconButtons className="w-[55px]" names={["star", "clipboard"]} />
      <IconButtons className="ml-[15px] w-[200px]" names={["folder", "folder", "folder", "folder", "folder", "folder"]} />
      <IconButtons
        className="ml-[15px] w-[875px]"
        names={[
          "bz", "youtube", "at", "gmx", "redX", "com", "braid", "bag", "sparkasse", "gh",
          "car", "greenDown", "sColor", "compass", "ring", "css", "phone", "goofy", "smiley", "vGerman",
          "sun", "clipPen", "chipRed", "telekom", "film", "camera", "pulse", "tool53", "puzzle", "w3",
        ]}
      />
      <a href="#mitglieder" className="ml-[7px] flex h-[26px] w-[120px] items-center gap-1.5 border-l border-[#777] pl-[7px]">
        <Icon name="flame" />
        Mitglieder
      </a>
      <IconButtons className="w-[197px]" names={["swirl", "globe", "play", "tv", "win10", "brush", "folder"]} />
      <a href="#test" className="w-11 pl-1.5">
        test
      </a>
      <IconButtons className="w-[197px]" names={["cb", "dBlack", "blueBook", "dGreen", "image", "cb", "session"]} />
    </div>
  );
}

function SearchRow() {
  return (
    <div className="flex h-[53px] items-center pr-[5px] pl-[5px] text-base">
      <label htmlFor="pref-search" className="w-[65px] text-[#424f5a]">
        <span className="underline decoration-1 underline-offset-2">S</span>uchen:
      </label>
      <div className="relative flex flex-1">
        <input
          id="pref-search"
          defaultValue="browser.newtabpage.columns"
          className="h-[37px] w-full rounded-xs border border-[#0996d8] bg-white px-3.5 text-[#333] outline-none"
        />
        <span className="absolute top-1.5 left-[241px] h-6 w-px bg-black" />
        <button type="button" aria-label="Löschen" className="absolute top-2 right-[13px]">
          <Icon name="clear" className="block size-5" />
        </button>
      </div>
    </div>
  );
}

const prefs = [{ name: "browser.newtabpage.columns", status: "Standard", type: "integer", value: "5" }];

function PrefTable() {
  return (
    <div className="mb-[5px] flex-1 border border-[#bdbdbd] bg-white">
      <table className="w-full table-fixed text-left text-base">
        <colgroup>
          <col className="w-[824px]" />
          <col className="w-[166px]" />
          <col className="w-[119px]" />
          <col />
          <col className="w-[43px]" />
        </colgroup>
        <thead className="bg-[#ebebeb] text-[#7f7f7f]">
          <tr className="h-9 border-b border-[#bdbdbd]">
            <th className="p-0 pt-0.5 pl-3 font-normal">
              <span className="flex items-center justify-between pr-3.5">
                Einstellungsname
                <Icon name="sortUp" />
              </span>
            </th>
            {["Status", "Typ", "Wert"].map((title) => (
              <th key={title} className="p-0 pt-0.5 font-normal">
                <span className="block border-l border-[#bdbdbd] pl-3">{title}</span>
              </th>
            ))}
            <th className="border-l border-[#d0d0d0] p-0">
              <button type="button" aria-label="Spalten auswählen" className="grid w-full place-items-center">
                <Icon name="picker" />
              </button>
            </th>
          </tr>
        </thead>
        <tbody className="text-[#333]">
          {prefs.map((pref) => (
            <tr key={pref.name} className="h-10">
              <td className="p-0 pl-0.5">{pref.name}</td>
              <td className="p-0 pl-0.5">{pref.status}</td>
              <td className="p-0 pl-0.5">{pref.type}</td>
              <td className="p-0 pl-0.5">{pref.value}</td>
              <td />
            </tr>
          ))}
        </tbody>
      </table>
    </div>
  );
}

function TaskIcon({ name }: { name: string }) {
  return (
    <button type="button" aria-label={name} className="grid w-[46px] place-items-center">
      <Icon name={name} />
    </button>
  );
}

const pinned = ["edge", "explorer", "notepadpp", "key", "check", "cards", "note", "dRed", "redPc", "grayCam"];

function Taskbar() {
  return (
    <footer className="flex h-[38px] bg-[#2d3236] text-sm whitespace-nowrap text-white">
      <button type="button" aria-label="Start" className="mr-1 grid w-11 place-items-center">
        <Icon name="windows" />
      </button>
      <TaskIcon name="blocks" />
      <TaskIcon name="monitorGraph" />
      <TaskIcon name="dinosaur" />
      <button type="button" className="ml-1.5 flex w-[190px] items-center gap-1 border-b-3 border-[#98a8b4] pt-1 pl-[5px]">
        <Icon name="thunderbird" />
        Posteingang - 2002An...
      </button>
      <div className="ml-[5px] flex">
        {pinned.map((name) => (
          <TaskIcon key={name} name={name} />
        ))}
      </div>
      <button type="button" className="ml-1.5 flex w-[190px] items-center gap-1 border-b-3 border-[#98a8b4] pt-1 pl-[5px]">
        <Icon name="fox" />
        Individuelle Anpassun...
      </button>
      <button type="button" className="ml-1.5 flex w-[200px] items-center gap-1 border-b-3 border-[#98a8b4] bg-[#384044] pt-1 pl-2.5">
        <Icon name="foxRing" />
        about:config - Mozilla...
      </button>
      <div className="ml-auto flex items-center">
        {["chevronUp", "battery", "network", "speaker"].map((name) => (
          <button key={name} type="button" aria-label={name} className="grid w-[30px] place-items-center">
            <Icon name={name} />
          </button>
        ))}
        <span className="ml-2 w-[62px]">19:45:19</span>
        <button type="button" aria-label="Info-Center" className="grid w-[50px] place-items-center">
          <Icon name="message" />
        </button>
        <div className="mr-[5px] ml-2.5 h-full w-px bg-[#777b7e]" />
      </div>
    </footer>
  );
}

export default function App() {
  return (
    <div className="flex min-h-screen flex-col bg-[#fbfbfb] font-['Open_Sans','Noto_Sans',sans-serif]">
      <TitleBar />
      <TabStrip />
      <NavBar />
      <BookmarksBar />
      <main className="flex flex-1 flex-col">
        <SearchRow />
        <PrefTable />
      </main>
      <Taskbar />
    </div>
  );
}
